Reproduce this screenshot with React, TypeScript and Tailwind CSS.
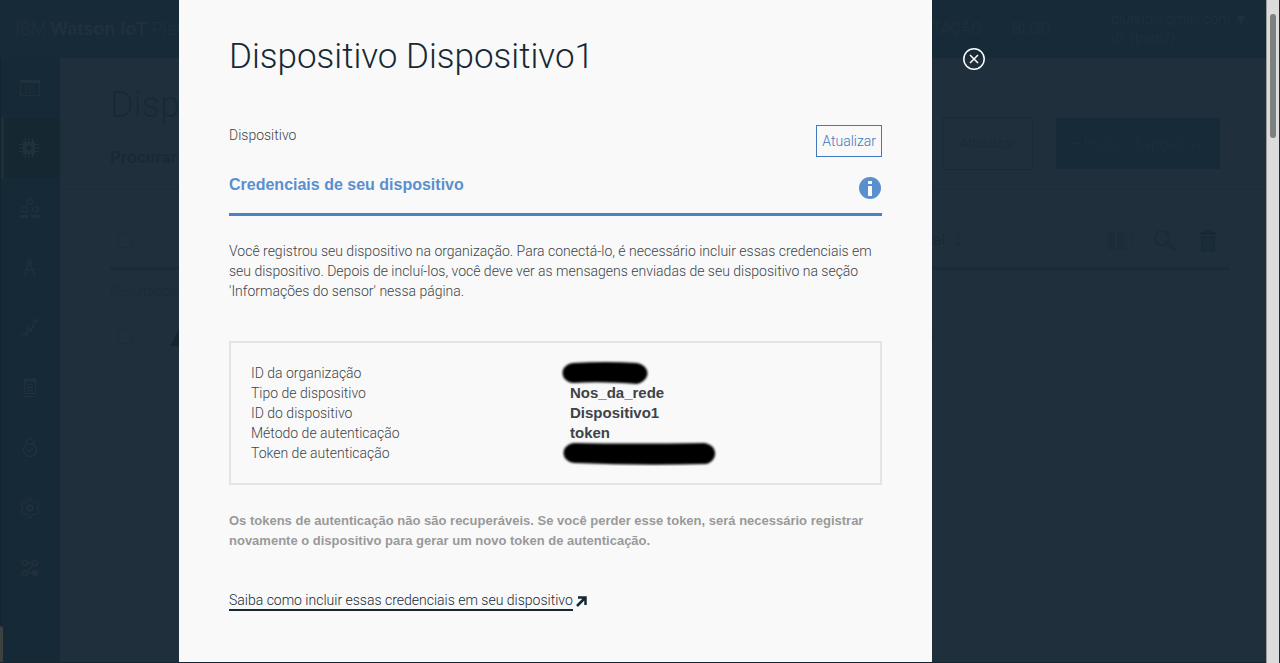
import React from "react";

const light = "font-['Roboto','Liberation_Sans',sans-serif] font-light";
const bold = "font-['Liberation_Sans',Arial,sans-serif] font-bold";

const icons: { label: string; drawing: React.ReactNode }[] = [
  {
    label: "Painéis",
    drawing: (
      <>
        <path d="M0.5 2.5h19v15h-19z" />
        <path d="M0 3.5h20" strokeWidth="3" />
        <path d="M6.500 14a4 4 0 1 1 7 0M10 10v6M7 14.500l-1 1M13 14.500l1 1" />
      </>
    ),
  },
  {
    label: "Dispositivos",
    drawing: (
      <>
        <path d="M6.500 0v20M10 0v20M13.500 0v20M0 6.500h20M0 10h20M0 13.500h20" />
        <rect x="4" y="4" width="12" height="12" fill="#20313c" stroke="none" />
        <circle cx="10" cy="10" r="2.500" fill="#152832" stroke="none" />
      </>
    ),
  },
  {
    label: "Membros",
    drawing: (
      <>
        <circle cx="10" cy="3.500" r="2.800" strokeWidth="1.300" />
        <circle cx="4.500" cy="11.500" r="2.800" strokeWidth="1.300" />
        <circle cx="15.500" cy="11.500" r="2.800" strokeWidth="1.300" />
        <path d="M0 18.500h8.500M11 18.500h9" strokeWidth="3" />
      </>
    ),
  },
  {
    label: "Regras",
    drawing: (
      <>
        <circle cx="9.500" cy="4" r="1.800" strokeWidth="1.800" />
        <path d="M9.500 0v3M8.500 6L4 19M10.500 6L15 19M5 13c3-1.500 6-1.500 10-1.500" strokeWidth="1.300" />
      </>
    ),
  },
  {
    label: "Uso",
    drawing: <path d="M1 17l3-2 2.500 3 2-9 3 4 3-11 2 2 3-3" strokeWidth="1.500" />,
  },
  {
    label: "Apps",
    drawing: (
      <>
        <path d="M4.500 1.500h11v14h-11zM4 18.500h12" />
        <path d="M4 2h12" strokeWidth="3" />
        <path d="M7 6.500h6M7 9.500h6M7 12.500h6" />
      </>
    ),
  },
  {
    label: "Segurança",
    drawing: (
      <>
        <circle cx="10" cy="12" r="6.500" strokeWidth="1.500" />
        <path d="M6 6V4.500a4 4 0 0 1 8 0V6M7 12l2 2 4-4" strokeWidth="1.500" />
      </>
    ),
  },
  {
    label: "Configurações",
    drawing: (
      <>
        <path
          d="M8.500 1h3l.7 2.600 2.200 1.200L17 4l2 3-1.800 2v2L19 13.500 17 16.500l-2.600-.8-2.200 1.200L11.500 19.500h-3l-.7-2.600-2.200-1.200L3 16.500 1 13.500 2.800 11V9L1 7l2-3 2.600.8 2.200-1.200z"
          strokeWidth="1.300"
        />
        <circle cx="10" cy="10" r="2.800" strokeWidth="2" />
      </>
    ),
  },
  {
    label: "Extensões",
    drawing: (
      <>
        <circle cx="5" cy="5" r="2.500" strokeWidth="1.500" />
        <circle cx="15" cy="5" r="2.500" strokeWidth="1.500" />
        <circle cx="5" cy="15" r="2.500" strokeWidth="1.500" />
        <circle cx="15" cy="15" r="2.500" fill="#20313c" strokeWidth="1.500" />
        <path d="M7.500 5h5M7.500 15h5M7 13l6-6" strokeWidth="1.500" />
      </>
    ),
  },
];

function TopBar() {
  return (
    <header className={`${light} flex h-[58px] items-center bg-[#162a37] pl-[15px] text-[#20313d]`}>
      <p className="flex-1 whitespace-nowrap text-lg">
        IBM <b className={bold}>Watson IoT</b> Platform
      </p>
      <nav className="flex gap-[30px] text-base">
        <a href="#documentacao">DOCUMENTAÇÃO</a>
        <a href="#blog">BLOG</a>
      </nav>
      <div className="ml-[60px] w-[155px] text-sm leading-5">
        <p>djunho@gmail.com ▼</p>
        <p>ID: (tn8tl7)</p>
      </div>
    </header>
  );
}

function SideBar() {
  return (
    <nav className="w-[60px] border-l border-[#13242c] bg-[#162936]">
      {icons.map((icon, i) => (
        <a
          key={icon.label}
          href="#menu"
          aria-label={icon.label}
          className={
            i === 1
              ? "flex h-[60px] items-center border-l-3 border-[#17313e] bg-[#152832] pl-[15px]"
              : "flex h-[60px] items-center pl-[19px]"
          }
        >
          <svg viewBox="0 0 20 20" className="size-5" fill="none" stroke="#20313c">
            {icon.drawing}
          </svg>
        </a>
      ))}
    </nav>
  );
}

function DeviceList() {
  return (
    <main className={`${light} min-w-0 flex-1 bg-[#1f303c] text-[#182a36]`}>
      <div className="flex h-[132px] justify-between border-b border-[#1b2d39] pr-[46px] pl-[50px]">
        <div className="pt-6">
          <h1 className="text-4xl leading-[46px]">Dispositivos</h1>
          <p className={`${bold} mt-5 text-base leading-5`}>Procurar</p>
        </div>
        <div className="flex items-center gap-[23px] pt-10 text-[15px]">
          <button className="h-[53px] w-[91px] border border-[#182b38]">Atualizar</button>
          <button className="h-[51px] w-[164px] bg-[#162a38] text-base text-[#1d2f3b]">+ Incluir dispositivo</button>
        </div>
      </div>
      <div className="mr-9 ml-[50px]">
        <div className="flex h-20 items-center border-b-3 border-[#1a2c37] pt-6 pr-3.5 pl-[7px]">
          <input
            type="checkbox"
            aria-label="Selecionar todos"
            className="size-[15px] appearance-none rounded-sm border border-[#1b2d38]"
          />
          <span className="ml-auto text-[15px] text-[#152833]">Local</span>
          <svg viewBox="0 0 8 12" className="ml-2.5 h-3 w-2" fill="#1b2d38">
            <path d="M4 0l3 4H1zM4 12l3-4H1z" />
          </svg>
          <div className="ml-[145px] flex items-center gap-[22px]">
            <svg viewBox="0 0 24 18" className="h-[18px] w-6" fill="#1b2d38" stroke="#1b2d38">
              <path d="M0.500 0.500h6v17h-6zM9.500 0.500h6v17h-6z" />
              <path d="M18.500 0.500h5v17h-5z" fill="none" />
            </svg>
            <svg viewBox="0 0 22 22" className="size-[22px]" fill="none" stroke="#1a2c37" strokeWidth="2">
              <circle cx="8" cy="8" r="7" />
              <path d="M13 13l2 2" />
              <path d="M15 15l6 5" strokeWidth="4" />
            </svg>
            <svg viewBox="0 0 16 22" className="ml-0.5 h-[22px] w-4" fill="#182a34">
              <path d="M0 2h5V0h6v2h5v3H0zM1 6h14v16H1z" />
              <path d="M4.500 8v12M8 8v12M11.500 8v12" stroke="#1f303c" />
            </svg>
          </div>
        </div>
        <p className="pt-[11px] text-sm leading-5 text-[#1a2c37] italic">Resultados</p>
        <div className="flex h-[50px] items-center pt-5 pr-[295px] pl-[7px]">
          <input
            type="checkbox"
            aria-label="Selecionar dispositivo"
            className="size-[15px] appearance-none rounded-sm border border-[#1b2d38]"
          />
          <svg viewBox="0 0 18 16" className="mt-1 ml-[38px] h-4 w-[18px]">
            <path d="M9 0l9 16H0z" fill="#142730" />
          </svg>
          <span className="ml-auto text-sm">Nenhuma</span>
        </div>
      </div>
    </main>
  );
}

const credentials = [
  { name: "ID da organização", value: "" },
  { name: "Tipo de dispositivo", value: "Nos_da_rede" },
  { name: "ID do dispositivo", value: "Dispositivo1" },
  { name: "Método de autenticação", value: "token" },
  { name: "Token de autenticação", value: "" },
];

function Redaction({ wide }: { wide: boolean }) {
  return wide ? (
    <svg viewBox="0 0 156 26" className="absolute -top-[18px] -left-2 h-[26px] w-[156px]" aria-label="Token oculto">
      <path d="M12 3 Q70 4 142 3 C157 5 156 21 144 24 Q80 26 12 23 C-2 21 -2 5 12 3z" className="blur-[1px]" />
    </svg>
  ) : (
    <svg viewBox="0 0 88 26" className="absolute -top-[18px] -left-[9px] h-[26px] w-[88px]" aria-label="ID oculto">
      <path d="M12 3 Q45 1 76 3 C90 6 90 20 76 24 Q40 21 12 23 C-2 21 -2 5 12 3z" className="blur-[1px]" />
    </svg>
  );
}

function DeviceDialog() {
  return (
    <section
      role="dialog"
      aria-labelledby="titulo"
      className={`${light} bg-[#f9f9f9] px-[50px] pt-[34px] text-sm leading-5 text-[#3c4448]`}
    >
      <h2 id="titulo" className="text-[35px] leading-[46px] text-[#152935]">
        Dispositivo Dispositivo1
      </h2>
      <div className="mt-[45px] flex items-start justify-between">
        <p>Dispositivo</p>
        <button className="h-8 border border-[#4178be] px-[5px] text-[#4178be]">Atualizar</button>
      </div>
      <div className="mt-[17px] flex h-[42px] items-start justify-between border-b-3 border-[#4a82c2]">
        <h3 className={`${bold} text-base leading-[22px] text-[#5a8fcf]`}>Credenciais de seu dispositivo</h3>
        <button aria-label="Informações" className="mt-[3px]">
          <svg viewBox="0 0 22 22" className="mr-px size-[22px]">
            <circle cx="11" cy="11" r="11" fill="#5a8fce" />
            <path d="M9 4h4v3H9zM9 9h4v10H9z" fill="#f9f9f9" />
          </svg>
        </button>
      </div>
      <p className="mt-[25px]">
        Você registrou seu dispositivo na organização. Para conectá-lo, é necessário incluir essas credenciais em seu
        dispositivo. Depois de incluí-los, você deve ver as mensagens enviadas de seu dispositivo na seção 'Informações
        do sensor' nessa página.
      </p>
      <dl className="mt-10 border-2 border-[#e4e4e4] p-5">
        {credentials.map((item) => (
          <div key={item.name} className="grid grid-cols-[319fr_290fr]">
            <dt>{item.name}</dt>
            <dd className={`${bold} text-[15px] leading-5`}>
              {item.value || (
                <span className="relative inline-block">
                  <Redaction wide={item.name.startsWith("Token")} />
                </span>
              )}
            </dd>
          </div>
        ))}
      </dl>
      <p className={`${bold} mt-[26px] text-[13px] leading-5 text-[#999]`}>
        Os tokens de autenticação não são recuperáveis. Se você perder esse token, será necessário registrar novamente o
        dispositivo para gerar um novo token de autenticação.
      </p>
      <a href="#credenciais" className="mt-10 inline-flex items-center gap-[3px] text-[#152935]">
        <span className="border-b-2 border-[#152935] leading-[18px]">
          Saiba como incluir essas credenciais em seu dispositivo
        </span>
        <svg viewBox="0 0 11 11" className="size-[11px]" fill="none" stroke="#152935" strokeWidth="2.500">
          <path d="M1 10L9 2M2 1.500h7.500V9" />
        </svg>
      </a>
    </section>
  );
}

export default function App() {
  return (
    <div className="relative flex min-h-screen bg-[#162936]">
      <div className="flex min-w-0 flex-1 flex-col">
        <TopBar />
        <div className="flex flex-1">
          <SideBar />
          <DeviceList />
        </div>
      </div>
      <div className="mr-px w-[13px] border-l border-[#9b9b9b] bg-[#dcdcdc] pt-3.5 pl-[3px]">
        <div className="h-[124px] w-1.5 rounded-full bg-[#7d8080]" />
      </div>
      <div className="absolute inset-y-0 right-3.5 left-0 grid grid-cols-[179fr_753fr_334fr] border-b border-[#142632]">
        <div className="flex items-end">
          <div className="h-9 w-[3px] rounded-tr-sm bg-[#3c403f]" />
        </div>
        <DeviceDialog />
        <div className="pt-12 pl-[31px]">
          <button aria-label="Fechar" className="block">
            <svg viewBox="0 0 22 22" className="size-[22px]" fill="none" stroke="#fff" strokeWidth="1.500">
              <circle cx="11" cy="11" r="10.200" />
              <path d="M7 7l8 8M15 7l-8 8" />
            </svg>
          </button>
        </div>
      </div>
    </div>
  );
}
